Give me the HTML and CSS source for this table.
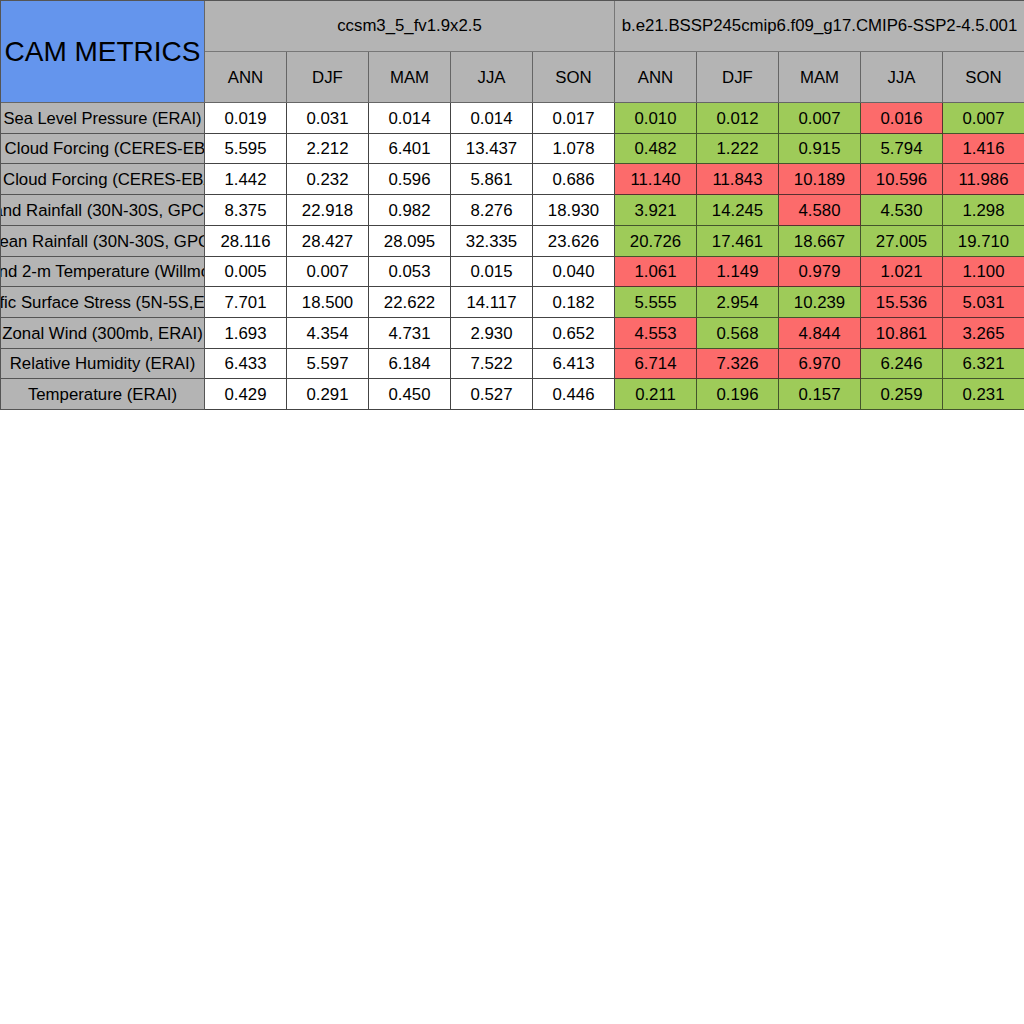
FILE: index.html
```html
<!DOCTYPE html>
<html>
<head>
<meta charset="utf-8">
<link rel="stylesheet" href="styles.css">
</head>
<body>
<div class="table">
  <div class="cell title">CAM METRICS</div>
  <div class="cell case case1">ccsm3_5_fv1.9x2.5</div>
  <div class="cell case case2">b.e21.BSSP245cmip6.f09_g17.CMIP6-SSP2-4.5.001</div>
  <div class="cell season">ANN</div><div class="cell season">DJF</div><div class="cell season">MAM</div><div class="cell season">JJA</div><div class="cell season">SON</div>
  <div class="cell season">ANN</div><div class="cell season">DJF</div><div class="cell season">MAM</div><div class="cell season">JJA</div><div class="cell season">SON</div>

  <div class="cell label label-tight"><span>Sea Level Pressure (ERAI)</span></div>
  <div class="cell w">0.019</div><div class="cell w">0.031</div><div class="cell w">0.014</div><div class="cell w">0.014</div><div class="cell w">0.017</div>
  <div class="cell g">0.010</div><div class="cell g">0.012</div><div class="cell g">0.007</div><div class="cell r">0.016</div><div class="cell g">0.007</div>

  <div class="cell label"><span>SW Cloud Forcing (CERES-EBAF)</span></div>
  <div class="cell w">5.595</div><div class="cell w">2.212</div><div class="cell w">6.401</div><div class="cell w">13.437</div><div class="cell w">1.078</div>
  <div class="cell g">0.482</div><div class="cell g">1.222</div><div class="cell g">0.915</div><div class="cell g">5.794</div><div class="cell r">1.416</div>

  <div class="cell label"><span>LW Cloud Forcing (CERES-EBAF)</span></div>
  <div class="cell w">1.442</div><div class="cell w">0.232</div><div class="cell w">0.596</div><div class="cell w">5.861</div><div class="cell w">0.686</div>
  <div class="cell r">11.140</div><div class="cell r">11.843</div><div class="cell r">10.189</div><div class="cell r">10.596</div><div class="cell r">11.986</div>

  <div class="cell label"><span>Land Rainfall (30N-30S, GPCP)</span></div>
  <div class="cell w">8.375</div><div class="cell w">22.918</div><div class="cell w">0.982</div><div class="cell w">8.276</div><div class="cell w">18.930</div>
  <div class="cell g">3.921</div><div class="cell g">14.245</div><div class="cell r">4.580</div><div class="cell g">4.530</div><div class="cell g">1.298</div>

  <div class="cell label"><span>Ocean Rainfall (30N-30S, GPCP)</span></div>
  <div class="cell w">28.116</div><div class="cell w">28.427</div><div class="cell w">28.095</div><div class="cell w">32.335</div><div class="cell w">23.626</div>
  <div class="cell g">20.726</div><div class="cell g">17.461</div><div class="cell g">18.667</div><div class="cell g">27.005</div><div class="cell g">19.710</div>

  <div class="cell label"><span>Land 2-m Temperature (Willmott)</span></div>
  <div class="cell w">0.005</div><div class="cell w">0.007</div><div class="cell w">0.053</div><div class="cell w">0.015</div><div class="cell w">0.040</div>
  <div class="cell r">1.061</div><div class="cell r">1.149</div><div class="cell r">0.979</div><div class="cell r">1.021</div><div class="cell r">1.100</div>

  <div class="cell label"><span>Pacific Surface Stress (5N-5S,ERAI)</span></div>
  <div class="cell w">7.701</div><div class="cell w">18.500</div><div class="cell w">22.622</div><div class="cell w">14.117</div><div class="cell w">0.182</div>
  <div class="cell g">5.555</div><div class="cell g">2.954</div><div class="cell g">10.239</div><div class="cell r">15.536</div><div class="cell r">5.031</div>

  <div class="cell label"><span>Zonal Wind (300mb, ERAI)</span></div>
  <div class="cell w">1.693</div><div class="cell w">4.354</div><div class="cell w">4.731</div><div class="cell w">2.930</div><div class="cell w">0.652</div>
  <div class="cell r">4.553</div><div class="cell g">0.568</div><div class="cell r">4.844</div><div class="cell r">10.861</div><div class="cell r">3.265</div>

  <div class="cell label"><span>Relative Humidity (ERAI)</span></div>
  <div class="cell w">6.433</div><div class="cell w">5.597</div><div class="cell w">6.184</div><div class="cell w">7.522</div><div class="cell w">6.413</div>
  <div class="cell r">6.714</div><div class="cell r">7.326</div><div class="cell r">6.970</div><div class="cell g">6.246</div><div class="cell g">6.321</div>

  <div class="cell label"><span>Temperature (ERAI)</span></div>
  <div class="cell w">0.429</div><div class="cell w">0.291</div><div class="cell w">0.450</div><div class="cell w">0.527</div><div class="cell w">0.446</div>
  <div class="cell g">0.211</div><div class="cell g">0.196</div><div class="cell g">0.157</div><div class="cell g">0.259</div><div class="cell g">0.231</div>
</div>
</body>
</html>
```
FILE: styles.css
```css
html, body {
  margin: 0;
  padding: 0;
  background: #ffffff;
}
body {
  font-family: "Liberation Sans", Arial, sans-serif;
  color: #000;
}
.table {
  width: 1025px;
  display: grid;
  grid-template-columns: 204px repeat(10, 82px);
  grid-template-rows: 51px 51px 31px 30px 31px 31px 31px 30px 31px 31px 30px 31px;
  border-top: 1px solid #555;
  border-left: 1px solid #555;
  box-sizing: border-box;
}
.cell {
  display: flex;
  align-items: center;
  justify-content: center;
  overflow: hidden;
  white-space: nowrap;
  border-right: 1px solid #444;
  border-bottom: 1px solid #444;
  font-size: 16.8px;
  box-sizing: border-box;
  min-width: 0;
}
.title {
  grid-row: 1 / 3;
  grid-column: 1;
  background: #6495ed;
  font-size: 28px;
  border-right-color: #666;
  border-bottom-color: #666;
}
.case {
  background: #b4b4b4;
  border-color: #777;
}
.case1 { grid-column: 2 / 7; }
.case2 { grid-column: 7 / 12; }
.season {
  background: #b4b4b4;
  border-color: #666;
  padding-top: 1px;
}
.label {
  background: #b4b4b4;
  border-right-color: #555;
  border-bottom-color: #555;
  padding-top: 1px;
}
.label span {
  flex: none;
}
.label-tight {
  font-size: 16.5px;
}
.w { background: #ffffff; padding-top: 1px; }
.g { background: #9ecb59; border-color: #44552c; padding-top: 1px; }
.r { background: #fc6b6b; border-color: #5a3030; padding-top: 1px; }
```
